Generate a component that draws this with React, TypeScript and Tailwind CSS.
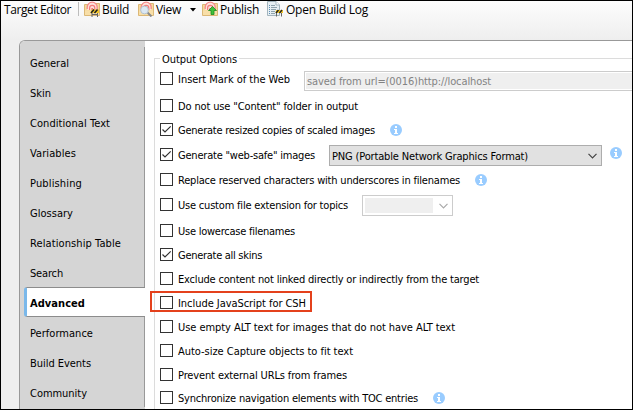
import { useLayoutEffect, useRef, useState } from "react";
import type { ReactNode } from "react";

/* Text line whose tracking is computed so that it fills a given width. */
function Fit({ w, className = "", children }: { w: number; className?: string; children: string }) {
  const ref = useRef<HTMLSpanElement>(null);
  const [spacing, setSpacing] = useState(0);
  useLayoutEffect(() => {
    const el = ref.current;
    if (el) {
      const natural = el.getBoundingClientRect().width - spacing * children.length;
      setSpacing((w - natural) / children.length);
    }
  }, [w, children]);
  return (
    <span ref={ref} className={"inline-block shrink-0 whitespace-pre " + className} style={{ letterSpacing: spacing }}>
      {children}
    </span>
  );
}

const tahoma = "font-['Tahoma','DejaVu_Sans_Condensed',sans-serif] text-[11px] leading-[13px] text-black";

function Folder() {
  return (
    <>
      <path d="M.5 3.5H5.5L6.5 2.5H15.5V14.5H.5Z" fill="#f6d99c" stroke="#dcb876" />
      <path d="M3.2 9V6.5A5 5 0 0 1 13.2 6.5V9Z" fill="#fde0dc" />
      <path d="M3.2 8V6.2A5 5 0 0 1 13.2 6.2V8" stroke="#f58a8a" strokeWidth="1.3" />
      <path d="M5.6 9V7A2.6 2.6 0 0 1 10.8 7V9" stroke="#f47c7c" strokeWidth="1.2" />
      <path d="M1 9.5H15V14H1Z" fill="#f8dfa8" />
      <circle cx="8.2" cy="8" r="1" fill="#ee6a6a" />
    </>
  );
}

function Barrier() {
  return (
    <>
      <path d="M7.5 8.5H15V12H6.5Z" fill="#f3c727" />
      <path d="M7 12L10 8.5M10.5 12L13.5 8.5" stroke="#222" strokeWidth="1.5" />
      <path d="M8 12V16M13.5 12V16M8 13.5H13.5" stroke="#666" />
    </>
  );
}

function ToolIcon({ kind }: { kind: "build" | "view" | "publish" | "log" }) {
  return (
    <svg width="16" height="16" viewBox="0 0 16 16" fill="none" className="shrink-0">
      {kind !== "log" && <Folder />}
      {kind === "build" && <Barrier />}
      {kind === "view" && (
        <>
          <path d="M9.5 11.5L13.5 15.5" stroke="#8a8a8a" strokeWidth="2" />
          <circle cx="6.5" cy="9" r="3.9" fill="#dbe8f3" stroke="#b3c1cd" />
        </>
      )}
      {kind === "publish" && <path d="M10.5 5.5L14.5 9.5H12V13.5H9V9.5H6.5Z" fill="#3fc23a" stroke="#1d8a22" strokeWidth=".8" />}
      {kind === "log" && (
        <>
          <path d="M.5 .5H9L12.5 4V14.5H.5Z" fill="#e7eff3" stroke="#a3b5be" />
          <path d="M9 .5V4H12.5" fill="#fff" stroke="#a3b5be" />
          <path d="M4 4.5H8M4 6.5H10M4 8.5H9M4 10.5H8M4 12.5H8" stroke="#8fa3ad" />
          <path d="M2 4.5H3M2 6.5H3M2 8.5H3M2 10.5H3M2 12.5H3" stroke="#5b8fb8" />
          <path d="M9 9H16V12H8.5Z" fill="#f3c727" />
          <path d="M9 12L11.5 9M12.5 12L15 9" stroke="#222" strokeWidth="1.4" />
          <path d="M9.5 12V15.5M14.5 12V15.5" stroke="#666" />
        </>
      )}
    </svg>
  );
}

function Info({ className }: { className: string }) {
  return (
    <svg width="12" height="12" viewBox="0 0 12 12" className={"shrink-0 " + className}>
      <circle cx="6" cy="6" r="6" fill="#99ccff" />
      <path d="M5 2H7V4H5ZM4 5H7V9H8V10H4V9H5V6H4Z" fill="#fff" />
    </svg>
  );
}

function Chevron({ color }: { color: string }) {
  return (
    <svg width="9" height="6" viewBox="0 0 9 6" fill="none" className="shrink-0">
      <path d="M.5 .8L4.5 4.8L8.5 .8" stroke={color} strokeWidth="1.2" />
    </svg>
  );
}

function Row({ h, label, w, checked, marked, children }: { h: string; label: string; w: number; checked?: boolean; marked?: boolean; children?: ReactNode }) {
  return (
    <div className={"relative flex shrink-0 items-start " + h}>
      {marked && <span className="absolute -left-[10px] -top-[5px] h-[21px] w-[162px] border-2 border-[#e4411c]" />}
      <span className="mr-[5px] flex size-[13px] shrink-0 items-center justify-center border border-[#333] bg-white">
        {checked && (
          <svg width="11" height="11" viewBox="0 0 11 11" fill="none">
            <path d="M1.5 5.5L4 8L9.7 2.3" stroke="#333" strokeWidth="1.2" />
          </svg>
        )}
      </span>
      <Fit w={w - 1} className={"mt-px mr-px " + tahoma}>{label}</Fit>
      {children}
    </div>
  );
}

const tabs: [string, number][] = [
  ["General", 39], ["Skin", 21], ["Conditional Text", 80], ["Variables", 46], ["Publishing", 52],
  ["Glossary", 43], ["Relationship Table", 91], ["Search", 33], ["Advanced", 55],
  ["Performance", 63], ["Build Events", 61], ["Community", 57],
];

const tool = "font-['Open_Sans',sans-serif] text-[12px] leading-[16px] text-black mt-px";

export default function App() {
  return (
    <div className="flex h-[410px] w-[633px] flex-col overflow-hidden border border-black bg-[#efefef]">
      <header className="flex h-[39px] shrink-0 items-start bg-linear-to-b from-[#fdfdfd] to-[#eeeeee] pl-[3px]">
        <Fit w={67} className={tool}>Target Editor</Fit>
        <span className="ml-[7px] mt-px h-[14px] w-px bg-[#bdbdbd]" />
        <span className="ml-[5px] flex"><ToolIcon kind="build" /></span>
        <Fit w={27} className={"ml-[2px] " + tool}>Build</Fit>
        <span className="ml-[9px] flex"><ToolIcon kind="view" /></span>
        <Fit w={25} className={"ml-[2px] " + tool}>View</Fit>
        <svg width="6" height="4" viewBox="0 0 6 4" className="ml-[9px] mt-[7px] shrink-0"><path d="M0 0H6L3 3.6Z" fill="#000" /></svg>
        <span className="ml-[6px] flex"><ToolIcon kind="publish" /></span>
        <Fit w={39} className={"ml-[2px] " + tool}>Publish</Fit>
        <span className="ml-[8px] flex"><ToolIcon kind="log" /></span>
        <Fit w={82} className={"ml-[3px] " + tool}>Open Build Log</Fit>
      </header>
      <div className="ml-[18px] flex h-[369px] shrink-0 overflow-hidden rounded-tl-[6px] border-l border-t border-[#999] bg-white">
        <nav className="flex w-[125px] shrink-0 flex-col bg-[#d5d5d5] pt-[6px]">
          {tabs.map(([name, w]) =>
            name === "Advanced" ? (
              <div key={name} className="ml-[4px] flex h-[30px] shrink-0 items-start rounded-l-[3px] border-y border-y-[#8c8c8c] border-l-[3px] border-l-[#7ab8ea] bg-white pl-[3px] pt-[9px]">
                <Fit w={w} className={"font-bold " + tahoma}>{name}</Fit>
              </div>
            ) : (
              <div key={name} className="flex h-[30px] shrink-0 items-start border-r border-[#999] pl-[10px] pt-[10px]">
                <Fit w={w} className={tahoma}>{name}</Fit>
              </div>
            )
          )}
        </nav>
        <main className="min-w-0 flex-1 overflow-hidden pl-[9px] pt-[11px]">
          <div className="flex h-[6px] items-start">
            <span className="mt-[6px] h-px w-[6px] shrink-0 bg-[#dcdcdc]" />
            <Fit w={75} className={"ml-[2px] mr-[2px] mt-px " + tahoma}>Output Options</Fit>
            <span className="mt-[6px] h-px flex-1 bg-[#dcdcdc]" />
          </div>
          <section className="flex h-[360px] flex-col border-l border-[#dcdcdc] pl-[5px] pt-[14px]">
            <Row h="h-[27px]" label="Insert Mark of the Web" w={113}>
              <div className="-mt-px ml-[13px] h-[20px] flex-1 border border-r-0 border-[#ccc] bg-white py-px pl-px">
                <div className="h-[16px] bg-[#efefef] pl-px">
                  <Fit w={184} className={tahoma + " mt-[2px] align-top text-[#838383]!"}>saved from url=(0016)http://localhost</Fit>
                </div>
              </div>
            </Row>
            <Row h="h-[24px]" label={'Do not use "Content" folder in output'} w={181} />
            <Row h="h-[25px]" label="Generate resized copies of scaled images" w={198} checked>
              <Info className="ml-[14px] mt-px" />
            </Row>
            <Row h="h-[25px]" label={'Generate "web-safe" images'} w={138} checked>
              <div className="-mt-[3px] ml-[13px] flex h-[21px] w-[273px] shrink-0 items-center justify-between border border-[#adadad] bg-[#e1e1e1] pl-[2px] pr-[4px]">
                <Fit w={196} className={tahoma + " mt-px"}>PNG (Portable Network Graphics Format)</Fit>
                <Chevron color="#444" />
              </div>
              <Info className="-mt-px ml-[8px]" />
            </Row>
            <Row h="h-[25px]" label="Replace reserved characters with underscores in filenames" w={283}>
              <Info className="ml-[14px] mt-px" />
            </Row>
            <Row h="h-[26px]" label="Use custom file extension for topics" w={171}>
              <div className="-mt-[3px] ml-[13px] flex h-[21px] w-[91px] shrink-0 items-center justify-between border border-[#ccc] bg-white pl-[2px] pr-[4px]">
                <span className="h-[15px] w-[68px] bg-[#efefef]" />
                <Chevron color="#aaa" />
              </div>
            </Row>
            <Row h="h-[24px]" label="Use lowercase filenames" w={118} />
            <Row h="h-[24px]" label="Generate all skins" w={85} checked />
            <Row h="h-[24px]" label="Exclude content not linked directly or indirectly from the target" w={302} />
            <Row h="h-[24px]" label="Include JavaScript for CSH" w={129} marked />
            <Row h="h-[24px]" label="Use empty ALT text for images that do not have ALT text" w={278} />
            <Row h="h-[24px]" label="Auto-size Capture objects to fit text" w={176} />
            <Row h="h-[23px]" label="Prevent external URLs from frames" w={170} />
            <Row h="h-[13px]" label="Synchronize navigation elements with TOC entries" w={241}>
              <Info className="ml-[14px] mt-px" />
            </Row>
          </section>
        </main>
      </div>
    </div>
  );
}
